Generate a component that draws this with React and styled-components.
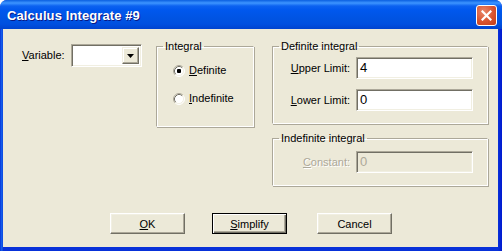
import styled, { createGlobalStyle } from "styled-components";

const GlobalStyle = createGlobalStyle`
  html, body {
    margin: 0;
    padding: 0;
    background: #ffffff;
  }
  body {
    font-family: "Liberation Sans", Arial, sans-serif;
    font-size: 11px;
    color: #000;
  }
`;

const Window = styled.div`
  width: 502px;
  height: 251px;
  display: flex;
  flex-direction: column;
  border-radius: 7px 7px 0 0;
  overflow: hidden;
  background: linear-gradient(to right, #0831d9 0, #166aee 2px, #0831d9 3px, #0831d9 calc(100% - 4px), #0019cf 100%);
  box-sizing: border-box;
`;

const TitleBar = styled.div`
  height: 29px;
  flex-shrink: 0;
  display: flex;
  align-items: center;
  justify-content: space-between;
  padding: 1px 5px 0 7px;
  box-sizing: border-box;
  background: linear-gradient(
    to bottom,
    #0a5fe0 0,
    #3d95ff 3px,
    #0c62f0 6px,
    #0058ee 10px,
    #0054e3 18px,
    #0050e0 24px,
    #0043cf 29px
  );
`;

const Title = styled.span`
  font-family: "Liberation Sans", Arial, sans-serif;
  font-weight: bold;
  font-size: 13px;
  color: #ffffff;
  text-shadow: 1px 1px 0 #0a1883;
  letter-spacing: 0.1px;
`;

const CloseButton = styled.div`
  width: 21px;
  height: 21px;
  box-sizing: border-box;
  border: 1px solid #ffffff;
  border-radius: 3px;
  background: radial-gradient(circle at 35% 30%, #e9876a 0, #d8532f 55%, #c23d1a 100%);
  display: flex;
  align-items: center;
  justify-content: center;
`;

const Client = styled.div`
  flex: 1;
  margin: 0 4px 4px 3px;
  background: #ece9d8;
  padding: 11px 0 0 19px;
  display: flex;
  flex-direction: column;
`;

const TopRow = styled.div`
  display: flex;
  align-items: flex-start;
`;

const VariableField = styled.div`
  width: 134px;
  flex-shrink: 0;
  display: flex;
  align-items: center;
  padding-top: 4px;
`;

const Label = styled.label`
  font-size: 11px;
  line-height: 13px;
  white-space: nowrap;
  color: ${(p) => (p.$disabled ? "#aca899" : "#000")};
  text-shadow: ${(p) => (p.$disabled ? "1px 1px 0 #ffffff" : "none")};
  text-align: ${(p) => (p.$right ? "right" : "left")};
`;

const Key = styled.span`
  text-decoration: underline;
  text-underline-offset: 1px;
`;

const Combo = styled.div`
  width: 71px;
  height: 23px;
  margin-left: 6px;
  box-sizing: border-box;
  display: flex;
  border: 1px solid;
  border-color: #aca899 #ffffff #ffffff #aca899;
  box-shadow: inset 1px 1px 0 #716f64, inset -1px -1px 0 #f1efe2;
  padding: 2px;
  background: #ffffff;
`;

const ComboField = styled.div`
  flex: 1;
  background: #ffffff;
`;

const DropButton = styled.div`
  width: 17px;
  box-sizing: border-box;
  background: #ece9d8;
  border: 1px solid;
  border-color: #f1efe2 #716f64 #716f64 #f1efe2;
  box-shadow: inset -1px -1px 0 #aca899, inset 1px 1px 0 #ffffff;
  display: flex;
  align-items: center;
  justify-content: center;
`;

const Group = styled.fieldset`
  margin: 0 0 0 ${(p) => p.$ml || 0}px;
  padding: ${(p) => p.$pt || 0}px 0 0 0;
  width: ${(p) => p.$w}px;
  height: ${(p) => p.$h}px;
  box-sizing: border-box;
  border: 1px solid #d0d0bf;
  border-color: #aca899 #ffffff #ffffff #aca899;
  box-shadow: 1px 1px 0 #aca899, inset 1px 1px 0 #ffffff;
  flex-shrink: 0;
  min-inline-size: 0;
`;

const Legend = styled.legend`
  margin-left: 6px;
  padding: 0 2px;
  font-size: 11px;
  line-height: 13px;
  color: #000;
`;

const RightColumn = styled.div`
  display: flex;
  flex-direction: column;
  gap: 8px;
  margin-left: 18px;
`;

const RadioList = styled.div`
  display: flex;
  flex-direction: column;
  gap: 15px;
  padding: 11px 0 0 16px;
`;

const RadioRow = styled.div`
  display: flex;
  align-items: center;
  gap: 4px;
  height: 13px;
`;

const FieldGrid = styled.div`
  display: grid;
  grid-template-columns: 77px 117px;
  column-gap: 6px;
  row-gap: 10px;
  align-items: center;
`;

const TextBox = styled.div`
  height: 22px;
  box-sizing: border-box;
  border: 1px solid;
  border-color: #aca899 #ffffff #ffffff #aca899;
  box-shadow: inset 1px 1px 0 #716f64, inset -1px -1px 0 #f1efe2;
  background: ${(p) => (p.$disabled ? "#ece9d8" : "#ffffff")};
  color: ${(p) => (p.$disabled ? "#aca899" : "#000")};
  font-size: 13px;
  line-height: 20px;
  padding-left: 3px;
`;

const ButtonRow = styled.div`
  display: flex;
  gap: 27px;
  margin-top: 27px;
  padding-left: 88px;
`;

const Button = styled.div`
  width: 75px;
  height: 21px;
  box-sizing: border-box;
  background: #ece9d8;
  display: flex;
  align-items: center;
  justify-content: center;
  font-size: 11px;
  border: 1px solid;
  border-color: ${(p) =>
    p.$default ? "#000 #000 #000 #000" : "#ffffff #716f64 #716f64 #ffffff"};
  box-shadow: ${(p) =>
    p.$default
      ? "inset 1px 1px 0 #ffffff, inset -1px -1px 0 #716f64, inset -2px -2px 0 #aca899"
      : "inset -1px -1px 0 #aca899, inset 1px 1px 0 #f1efe2"};
  margin-left: ${(p) => p.$ml || 0}px;
`;

const Radio = ({ checked }) => (
  <svg width="12" height="12" viewBox="0 0 12 12">
    <circle cx="6" cy="6" r="5" fill="#ffffff" />
    <path d="M2.11 9.89 A5.5 5.5 0 0 1 9.89 2.11" stroke="#aca899" fill="none" />
    <path d="M9.89 2.11 A5.5 5.5 0 0 1 2.11 9.89" stroke="#ffffff" fill="none" />
    <path d="M2.82 9.18 A4.5 4.5 0 0 1 9.18 2.82" stroke="#716f64" fill="none" />
    <path d="M9.18 2.82 A4.5 4.5 0 0 1 2.82 9.18" stroke="#f1efe2" fill="none" />
    {checked && <rect x="4" y="4" width="4" height="4" rx="1" fill="#000" />}
  </svg>
);

export default function App() {
  return (
    <>
      <GlobalStyle />
      <Window>
        <TitleBar>
          <Title>Calculus Integrate #9</Title>
          <CloseButton>
            <svg width="11" height="11" viewBox="0 0 11 11">
              <path d="M1.5 1.5 L9.5 9.5 M9.5 1.5 L1.5 9.5" stroke="#ffffff" strokeWidth="2.2" strokeLinecap="square" />
            </svg>
          </CloseButton>
        </TitleBar>
        <Client>
          <TopRow>
            <VariableField>
              <Label>
                <Key>V</Key>ariable:
              </Label>
              <Combo>
                <ComboField />
                <DropButton>
                  <svg width="7" height="4" viewBox="0 0 7 4">
                    <path d="M0 0 H7 L3.5 4 Z" fill="#000" />
                  </svg>
                </DropButton>
              </Combo>
            </VariableField>
            <Group $w={98} $h={87}>
              <Legend>Integral</Legend>
              <RadioList>
                <RadioRow>
                  <Radio checked />
                  <Label>
                    <Key>D</Key>efinite
                  </Label>
                </RadioRow>
                <RadioRow>
                  <Radio />
                  <Label>
                    <Key>I</Key>ndefinite
                  </Label>
                </RadioRow>
              </RadioList>
            </Group>
            <RightColumn>
              <Group $w={216} $h={84} $pt={4}>
                <Legend>Definite integral</Legend>
                <FieldGrid>
                  <Label $right>
                    <Key>U</Key>pper Limit:
                  </Label>
                  <TextBox>4</TextBox>
                  <Label $right>
                    <Key>L</Key>ower Limit:
                  </Label>
                  <TextBox>0</TextBox>
                </FieldGrid>
              </Group>
              <Group $w={216} $h={54} $pt={6}>
                <Legend>Indefinite integral</Legend>
                <FieldGrid>
                  <Label $right $disabled>
                    <Key>C</Key>onstant:
                  </Label>
                  <TextBox $disabled>0</TextBox>
                </FieldGrid>
              </Group>
            </RightColumn>
          </TopRow>
          <ButtonRow>
            <Button>
              <Key>O</Key>K
            </Button>
            <Button $default>
              <Key>S</Key>implify
            </Button>
            <Button $ml={3}>Cancel</Button>
          </ButtonRow>
        </Client>
      </Window>
    </>
  );
}
